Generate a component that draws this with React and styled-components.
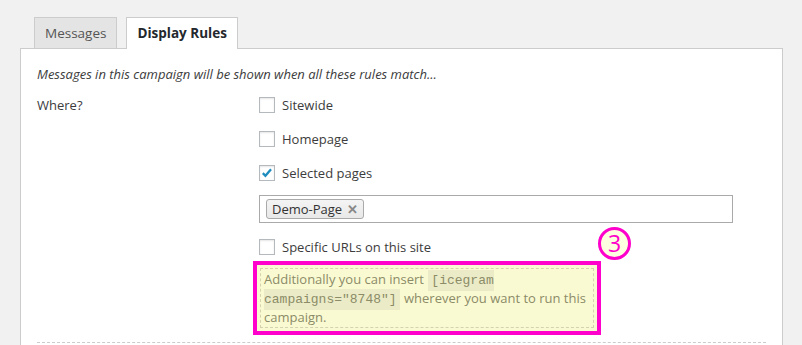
import React from 'react';
import styled, { createGlobalStyle } from 'styled-components';

const GlobalStyle = createGlobalStyle`
  body {
    margin: 0;
    background: #f1f1f1;
    font-family: "Open Sans", "Noto Sans", sans-serif;
    font-size: 13px;
    color: #3c3c3c;
  }
`;

const Page = styled.div`
  padding: 17px 19px 0 20px;
`;

const TabBar = styled.div`
  display: flex;
  gap: 9px;
  padding-left: 14px;
`;

const Tab = styled.div`
  box-sizing: border-box;
  padding: 0 10px;
  display: flex;
  align-items: center;
  border: 1px solid #ccc;
  border-bottom: none;
  font-size: 13.5px;
  font-weight: ${(p) => (p.active ? 700 : 400)};
  color: ${(p) => (p.active ? '#23282d' : '#555')};
  background: ${(p) => (p.active ? '#fff' : '#e4e4e4')};
  margin-bottom: ${(p) => (p.active ? '-1px' : '0')};
  height: ${(p) => (p.active ? '32px' : '31px')};
  padding-bottom: ${(p) => (p.active ? '1px' : '0')};
  position: relative;
  z-index: 1;
`;

const Panel = styled.div`
  background: #fff;
  border: 1px solid #ccc;
  border-bottom: none;
  padding: 15px 16px 3px;
`;

const Intro = styled.p`
  margin: 0;
  font-style: italic;
  line-height: 20px;
`;

const RuleGrid = styled.div`
  display: grid;
  grid-template-columns: 222px 1fr;
  margin-top: 4px;
`;

const RuleLabel = styled.div`
  padding-top: 7px;
  line-height: 20px;
`;

const Options = styled.div`
  display: flex;
  flex-direction: column;
`;

const CheckRow = styled.label`
  display: flex;
  align-items: center;
  gap: 7px;
  height: 20px;
  margin: 7px 0;
  line-height: 20px;
`;

const Box = styled.span`
  width: 16px;
  height: 16px;
  box-sizing: border-box;
  border: 1px solid #b4b9be;
  background: #fff;
  box-shadow: inset 0 1px 2px rgba(0, 0, 0, 0.1);
  display: flex;
  align-items: center;
  justify-content: center;
`;

const TagInput = styled.div`
  width: 474px;
  height: 28px;
  box-sizing: border-box;
  margin: 5px 0 7px;
  border: 1px solid #aaa;
  background: #fff;
  display: flex;
  align-items: center;
  padding-left: 6px;
`;

const Tag = styled.span`
  display: inline-flex;
  align-items: center;
  gap: 5px;
  height: 20px;
  box-sizing: border-box;
  padding: 0 5px 0 5px;
  border: 1px solid #aaa;
  border-radius: 3px;
  background: linear-gradient(#f4f4f4, #e8e8e8);
  color: #333;
`;

const TagClose = styled.span`
  color: #888;
  font-size: 13px;
  font-weight: 700;
`;

const Note = styled.div`
  position: relative;
  width: 348px;
  box-sizing: border-box;
  margin: -3px 0 0 -6px;
  border: 4px solid #f0c;
  background: #fafad2;
  padding: 3px;
`;

const NoteInner = styled.div`
  border: 1px dashed #d3d3b0;
  padding: 1px 3px 0;
  line-height: 19px;
  color: #8b8b68;
`;

const Code = styled.code`
  font-family: "Liberation Mono", monospace;
  font-size: 13px;
  line-height: 1;
  background: #ebebc7;
  padding: 3px 3px;
  margin: 0 1px;
`;

const Marker = styled.span`
  position: absolute;
  left: calc(100% + 1px);
  top: -38px;
  width: 33px;
  height: 33px;
  box-sizing: border-box;
  border: 3px solid #f0c;
  border-radius: 50%;
  background: #fdfde0;
  color: #f0c;
  font-size: 23px;
  line-height: 1;
  display: flex;
  align-items: center;
  justify-content: center;
`;

const Divider = styled.div`
  margin-top: 7px;
  border-top: 1px dashed #ccc;
  height: 10px;
`;

const Check = ({ checked, children }) => (
  <CheckRow>
    <Box>
      {checked && (
        <svg width="16" height="16" viewBox="0 0 16 16">
          <path d="M3.2 8.2l3 3 6.4-7.6" fill="none" stroke="#1e8cbe" strokeWidth="2.6" strokeLinecap="butt" />
        </svg>
      )}
    </Box>
    {children}
  </CheckRow>
);

export default function App() {
  return (
    <Page>
      <GlobalStyle />
      <TabBar>
        <Tab>Messages</Tab>
        <Tab active>Display Rules</Tab>
      </TabBar>
      <Panel>
        <Intro>Messages in this campaign will be shown when all these rules match...</Intro>
        <RuleGrid>
          <RuleLabel>Where?</RuleLabel>
          <Options>
            <Check>Sitewide</Check>
            <Check>Homepage</Check>
            <Check checked>Selected pages</Check>
            <TagInput>
              <Tag>
                Demo-Page <TagClose>✕</TagClose>
              </Tag>
            </TagInput>
            <Check>Specific URLs on this site</Check>
            <Note>
              <NoteInner>
                Additionally you can insert <Code>[icegram campaigns="8748"]</Code> wherever you want to run this campaign.
              </NoteInner>
              <Marker>3</Marker>
            </Note>
          </Options>
        </RuleGrid>
        <Divider />
      </Panel>
    </Page>
  );
}
